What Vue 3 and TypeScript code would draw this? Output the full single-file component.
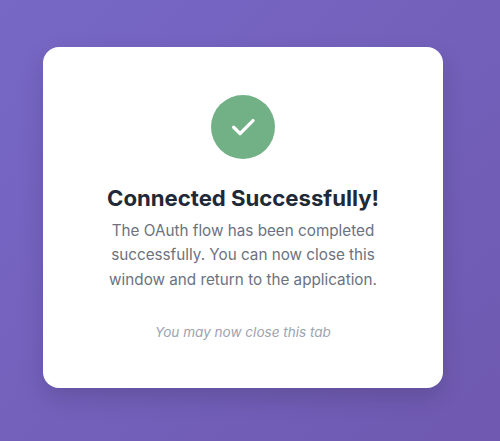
<script setup lang="ts">
const title: string = 'Connected Successfully!'
</script>

<template>
  <main class="page">
    <section class="card">
      <div class="icon">
        <svg width="32" height="32" viewBox="0 0 24 24" fill="none" stroke="#fff" stroke-width="2.5" stroke-linecap="round" stroke-linejoin="round">
          <path d="M5 12.2l4.8 4.8L19.5 7.2" />
        </svg>
      </div>
      <h1 class="title">{{ title }}</h1>
      <p class="desc">The OAuth flow has been completed successfully. You can now close this window and return to the application.</p>
      <p class="note">You may now close this tab</p>
    </section>
  </main>
</template>

<style>
html, body { margin: 0; padding: 0; }
</style>

<style scoped>
.page {
  box-sizing: border-box;
  width: 500px;
  height: 441px;
  overflow: hidden;
  padding: 47px 57px 53px 43px;
  background: linear-gradient(135deg, #7768c6 0%, #6f59b0 100%);
  font-family: Inter, "Liberation Sans", sans-serif;
}
.card {
  box-sizing: border-box;
  width: 400px;
  height: 341px;
  padding: 48px 48px 0;
  display: flex;
  flex-direction: column;
  align-items: center;
  text-align: center;
  background: #fff;
  border-radius: 16px;
  box-shadow: 0 10px 25px rgba(0, 0, 0, 0.14);
}
.icon {
  width: 64px;
  height: 64px;
  flex: none;
  border-radius: 50%;
  background: #72b186;
  display: flex;
  align-items: center;
  justify-content: center;
}
.title {
  margin: 24px -10px 0;
  font-size: 22.15px;
  line-height: 30px;
  font-weight: 700;
  color: #1f2937;
  white-space: nowrap;
}
.desc {
  margin: 6px 0 0;
  font-size: 15.25px;
  line-height: 24.4px;
  color: #6b7280;
}
.note {
  margin: 30px 0 0;
  font-size: 13.55px;
  line-height: 20px;
  font-style: italic;
  color: #9ca3af;
}
</style>
